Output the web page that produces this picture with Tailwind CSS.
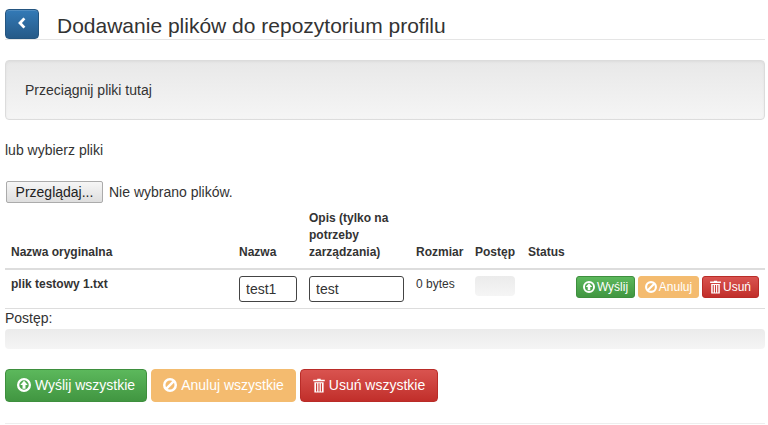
<!DOCTYPE html>
<html lang="pl">
<head>
    <meta charset="UTF-8">
    <meta name="viewport" content="width=device-width, initial-scale=1.0">
    <title>Dodawanie plików do repozytorium profilu</title>
    <script src="https://cdn.jsdelivr.net/npm/@tailwindcss/browser@4"></script>
</head>
<body class="bg-white text-[#333] font-['Liberation_Sans',Arial,sans-serif] text-[14px] leading-[20px]">
<div class="w-[760px] mx-[5px] h-[425px] overflow-hidden">

    <header class="flex items-start pt-[9px] h-[40px] border-b border-[#e5e5e5]">
        <button class="w-[34px] h-[30px] rounded-[4px] border border-[#245580] bg-gradient-to-b from-[#337ab7] to-[#265a88] flex items-center justify-center shadow-[inset_0_1px_0_rgba(255,255,255,.15)]">
            <svg width="10" height="12" viewBox="0 0 10 12" class="-mt-[2px]"><path d="M7.4 1.4 3 6l4.4 4.6" fill="none" stroke="#fff" stroke-width="2.8"/></svg>
        </button>
        <h1 class="ml-[18px] text-[21px] leading-[34px] font-normal">Dodawanie plików do repozytorium profilu</h1>
    </header>

    <div class="mt-[20px] h-[60px] px-[19px] flex items-center rounded-[4px] border border-[#dcdcdc] bg-gradient-to-b from-[#e8e8e8] to-[#f5f5f5] shadow-[inset_0_1px_3px_rgba(0,0,0,.05)]">
        Przeciągnij pliki tutaj
    </div>

    <p class="mt-[20px]">lub wybierz pliki</p>

    <div class="mt-[21px] ml-[1px] flex items-center h-[22px]">
        <button class="w-[97px] h-[22px] border border-[#ababab] rounded-[2px] bg-gradient-to-b from-[#f6f6f6] to-[#dedede] text-[#222]">Przeglądaj...</button>
        <span class="ml-[6px]">Nie wybrano plików.</span>
    </div>

    <table class="mt-[7px] w-[760px] table-fixed border-collapse text-[12px]">
        <colgroup>
            <col class="w-[228px]"><col class="w-[70px]"><col class="w-[107px]"><col class="w-[59px]"><col class="w-[53px]"><col class="w-[48px]"><col class="w-[195px]">
        </colgroup>
        <thead>
            <tr class="border-b-2 border-[#ddd] text-left align-bottom">
                <th class="px-[6px] pb-[7px] leading-[17px]">Nazwa oryginalna</th>
                <th class="px-[6px] pb-[7px] leading-[17px]">Nazwa</th>
                <th class="px-[6px] pb-[7px] leading-[17px]">Opis (tylko na potrzeby zarządzania)</th>
                <th class="px-[6px] pb-[7px] leading-[17px]">Rozmiar</th>
                <th class="px-[6px] pb-[7px] leading-[17px]">Postęp</th>
                <th class="px-[6px] pb-[7px] leading-[17px]">Status</th>
                <th></th>
            </tr>
        </thead>
        <tbody>
            <tr class="border-b border-[#ddd] align-top h-[39px]">
                <td class="px-[6px] pt-[6px] font-bold leading-[17px]">plik testowy 1.txt</td>
                <td class="px-[6px] pt-[6px]"><input value="test1" class="block w-[58px] h-[26px] px-[6px] border border-[#444] rounded-[3px] text-[14px]"></td>
                <td class="px-[6px] pt-[6px]"><input value="test" class="block w-[95px] h-[26px] px-[6px] border border-[#444] rounded-[3px] text-[14px]"></td>
                <td class="px-[6px] pt-[6px] leading-[17px]">0 bytes</td>
                <td class="px-[6px] pt-[6px]"><div class="w-[40px] h-[20px] rounded-[4px] bg-gradient-to-b from-[#ebebeb] to-[#f5f5f5]"></div></td>
                <td></td>
                <td class="pt-[6px]">
                    <div class="flex gap-[3px] pl-[6px]">
                        <button class="h-[22px] w-[59px] flex items-center justify-center gap-[2px] rounded-[3px] border border-[#3e8f3e] bg-gradient-to-b from-[#5cb85c] to-[#419641] text-white">
                            <svg width="12" height="12" viewBox="0.4 0.4 11.2 11.2"><circle cx="6" cy="6" r="4.7" fill="none" stroke="#fff" stroke-width="1.8"/><path d="M6 2.6 9 6H7.2v3H4.8V6H3z" fill="#fff"/></svg>Wyślij
                        </button>
                        <button class="h-[22px] w-[61px] flex items-center justify-center gap-[2px] rounded-[3px] border border-[#f3bc70] bg-[#f4bb6f] text-white">
                            <svg width="12" height="12" viewBox="0.4 0.4 11.2 11.2"><circle cx="6" cy="6" r="4.6" fill="none" stroke="#fff" stroke-width="2"/><path d="M2.7 9.3 9.3 2.7" stroke="#fff" stroke-width="2"/></svg>Anuluj
                        </button>
                        <button class="h-[22px] w-[57px] flex items-center justify-center gap-[2px] rounded-[3px] border border-[#b92c28] bg-gradient-to-b from-[#d9534f] to-[#c12e2a] text-white">
                            <svg width="11" height="14" viewBox="1 0 10 13"><path d="M4.5 1.5V.6h3v.9H11v1.4H1V1.5zM2 3.6h8v9H2zM3.4 4.6v7h1v-7zm2.1 0v7h1v-7zm2.1 0v7h1v-7z" fill="#fff" fill-rule="evenodd"/></svg>Usuń
                        </button>
                    </div>
                </td>
            </tr>
        </tbody>
    </table>

    <p class="-mt-[1px]">Postęp:</p>
    <div class="mt-[1px] h-[20px] rounded-[4px] bg-gradient-to-b from-[#ebebeb] to-[#f5f5f5]"></div>

    <div class="mt-[20px] flex gap-[4px]">
        <button class="h-[33px] w-[142px] flex items-center justify-center gap-[4px] rounded-[4px] border border-[#3e8f3e] bg-gradient-to-b from-[#5cb85c] to-[#419641] text-white">
            <svg width="14" height="14" viewBox="0.4 0.4 11.2 11.2"><circle cx="6" cy="6" r="4.7" fill="none" stroke="#fff" stroke-width="1.8"/><path d="M6 2.6 9 6H7.2v3H4.8V6H3z" fill="#fff"/></svg>Wyślij wszystkie
        </button>
        <button class="h-[33px] w-[145px] flex items-center justify-center gap-[4px] rounded-[4px] border border-[#f3bc70] bg-[#f4bb6f] text-white">
            <svg width="14" height="14" viewBox="0.4 0.4 11.2 11.2"><circle cx="6" cy="6" r="4.6" fill="none" stroke="#fff" stroke-width="2"/><path d="M2.7 9.3 9.3 2.7" stroke="#fff" stroke-width="2"/></svg>Anuluj wszystkie
        </button>
        <button class="h-[33px] w-[138px] flex items-center justify-center gap-[4px] rounded-[4px] border border-[#b92c28] bg-gradient-to-b from-[#d9534f] to-[#c12e2a] text-white">
            <svg width="12" height="15" viewBox="1 0 10 13"><path d="M4.5 1.5V.6h3v.9H11v1.4H1V1.5zM2 3.6h8v9H2zM3.4 4.6v7h1v-7zm2.1 0v7h1v-7zm2.1 0v7h1v-7z" fill="#fff" fill-rule="evenodd"/></svg>Usuń wszystkie
        </button>
    </div>

    <hr class="mt-[21px] border-[#eee]">
</div>
</body>
</html>
